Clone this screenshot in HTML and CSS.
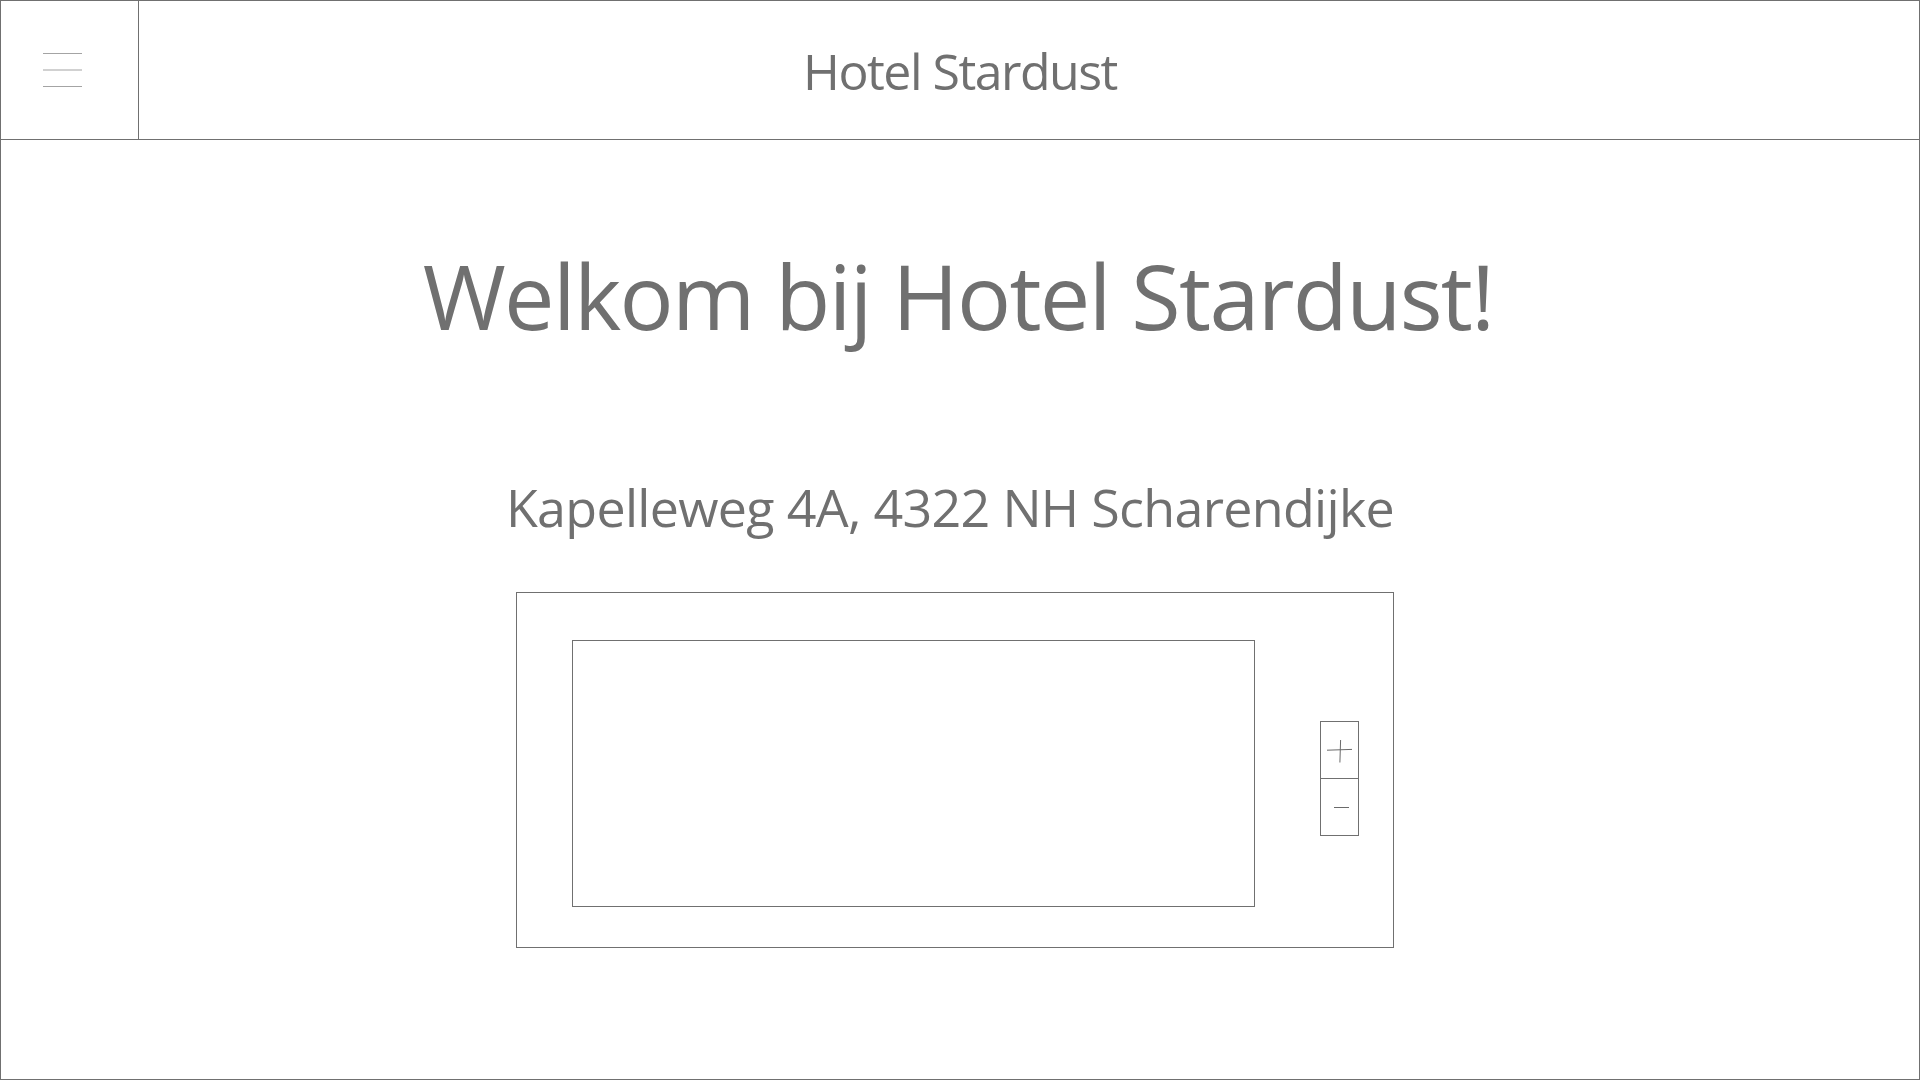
FILE: index.html
```html
<!DOCTYPE html>
<html lang="nl">
<head>
<meta charset="utf-8">
<title>Hotel Stardust</title>
<link rel="stylesheet" href="styles.css">
</head>
<body>
<div class="page">
  <header class="topbar">
    <button class="menu-btn" aria-label="Menu">
      <svg class="hamburger" width="40" height="36" viewBox="0 0 40 36">
        <line x1="0" y1="1.5" x2="39" y2="1.5"/>
        <line x1="0" y1="18" x2="39" y2="18"/>
        <line x1="0" y1="34.5" x2="39" y2="34.5"/>
      </svg>
    </button>
    <div class="brand">Hotel Stardust</div>
    <div class="spacer"></div>
  </header>
  <main class="content">
    <h1 class="welcome">Welkom bij Hotel Stardust!</h1>
    <p class="address">Kapelleweg 4A, 4322 NH Scharendijke</p>
    <div class="map">
      <div class="map-view"></div>
      <div class="zoom">
        <div class="zoom-btn zoom-in">
          <svg width="37" height="56" viewBox="0 0 37 56">
            <line x1="6" y1="28.2" x2="31" y2="27.4"/>
            <line x1="19.6" y1="18" x2="18.9" y2="40.5"/>
          </svg>
        </div>
        <div class="zoom-btn zoom-out">
          <svg width="37" height="56" viewBox="0 0 37 56">
            <line x1="13" y1="28.5" x2="28" y2="28.5"/>
          </svg>
        </div>
      </div>
    </div>
  </main>
</div>
</body>
</html>
```

FILE: styles.css
```css
html, body {
  margin: 0;
  padding: 0;
  background: #ffffff;
}

.page {
  box-sizing: border-box;
  width: 1920px;
  height: 1080px;
  border: 1px solid #707070;
  display: flex;
  flex-direction: column;
  font-family: "Open Sans", "Noto Sans", sans-serif;
  color: #707070;
}

.topbar {
  box-sizing: border-box;
  height: 139px;
  border-bottom: 1px solid #707070;
  display: grid;
  grid-template-columns: 138px 1fr 138px;
}

.menu-btn {
  box-sizing: border-box;
  width: 138px;
  height: 138px;
  margin: 0;
  padding: 0 0 0 42px;
  border: 0;
  border-right: 1px solid #707070;
  background: transparent;
  display: flex;
  align-items: center;
}

.hamburger line {
  stroke: #a4a4a4;
  stroke-width: 1.2;
}

.brand {
  font-size: 50px;
  letter-spacing: -1.5px;
  line-height: 135px;
  padding-top: 3px;
  text-align: center;
  white-space: nowrap;
}

.content {
  display: flex;
  flex-direction: column;
  align-items: center;
  padding-right: 10px;
}

.welcome {
  margin: 101px 0 0 6px;
  font-size: 90px;
  font-weight: 400;
  letter-spacing: -1.7px;
  line-height: 108px;
  white-space: nowrap;
}

.address {
  margin: 127px 10px 0 0;
  font-size: 52px;
  letter-spacing: -0.7px;
  line-height: 62px;
  white-space: nowrap;
}

.map {
  box-sizing: border-box;
  margin-top: 54px;
  width: 878px;
  height: 356px;
  border: 1px solid #707070;
  padding: 47px 34px 40px 55px;
  display: flex;
  align-items: flex-start;
  gap: 65px;
}

.map-view {
  box-sizing: border-box;
  width: 683px;
  height: 267px;
  border: 1px solid #707070;
  flex: none;
}

.zoom {
  box-sizing: border-box;
  margin-top: 81px;
  width: 39px;
  border: 1px solid #707070;
  display: flex;
  flex-direction: column;
}

.zoom-btn {
  height: 56px;
  display: flex;
}

.zoom-in {
  border-bottom: 1px solid #707070;
}

.zoom-btn line {
  stroke: #6a6a6a;
  stroke-width: 1;
}
```
